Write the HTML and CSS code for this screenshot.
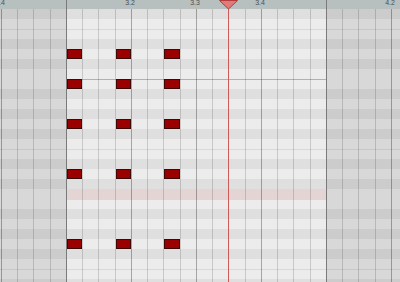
FILE: index.html
```html
<!DOCTYPE html>
<html>
<head>
<meta charset="utf-8">
<link rel="stylesheet" href="styles.css">
</head>
<body>
<div class="roll">
  <div class="ruler cols">
    <div class="c first"></div>
    <div class="c w16 beat"><span class="lbl">2.4</span></div>
    <div class="c w16"></div><div class="c w17"></div><div class="c w16"></div>
    <div class="c w16 bar"></div>
    <div class="c w16"></div><div class="c w17"></div><div class="c w16"></div>
    <div class="c w16 beat"><span class="lbl">3.2</span></div>
    <div class="c w16"></div><div class="c w17"></div><div class="c w16"></div>
    <div class="c w16 beat"><span class="lbl">3.3</span></div>
    <div class="c w16"></div><div class="c w17"></div><div class="c w16"></div>
    <div class="c w16 beat"><span class="lbl">3.4</span></div>
    <div class="c w16"></div><div class="c w17"></div><div class="c w16"></div>
    <div class="c w16 bar"></div>
    <div class="c w16"></div><div class="c w17"></div><div class="c w16"></div>
    <div class="c w9 beat"><span class="lbl">4.2</span></div>
  </div>
  <div class="body">
    <div class="regions">
      <div class="out l"></div><div class="loop"></div><div class="out r"></div>
    </div>
    <div class="keys">
      <div class="k b"></div>
      <div class="k"></div>
      <div class="k e"></div>
      <div class="k b"></div>
      <div class="k"></div>
      <div class="k b"></div>
      <div class="k"></div>
      <div class="k"><div class="seg oct"></div></div>
      <div class="k b"></div>
      <div class="k"></div>
      <div class="k b"></div>
      <div class="k"></div>
      <div class="k b"></div>
      <div class="k"></div>
      <div class="k e"></div>
      <div class="k b"></div>
      <div class="k"></div>
      <div class="k b"></div>
      <div class="k"><div class="seg hl"></div></div>
      <div class="k"><div class="seg oct faint"></div></div>
      <div class="k b"></div>
      <div class="k"></div>
      <div class="k b"></div>
      <div class="k"></div>
      <div class="k b"></div>
      <div class="k"></div>
      <div class="k e"></div>
      <div class="k b"></div>
    </div>
    <div class="lines cols">
      <div class="c first"></div>
      <div class="c w16 beat"></div>
      <div class="c w16"></div><div class="c w17"></div><div class="c w16"></div>
      <div class="c w16 bar"></div>
      <div class="c w16"></div><div class="c w17"></div><div class="c w16"></div>
      <div class="c w16 beat"></div>
      <div class="c w16"></div><div class="c w17"></div><div class="c w16"></div>
      <div class="c w16 beat"></div>
      <div class="c w16"></div><div class="c w17"></div><div class="c w16"></div>
      <div class="c w16 beat"></div>
      <div class="c w16"></div><div class="c w17"></div><div class="c w16"></div>
      <div class="c w16 bar"></div>
      <div class="c w16"></div><div class="c w17"></div><div class="c w16"></div>
      <div class="c w9 beat"></div>
    </div>
    <div class="notes">
      <div class="n" style="grid-area:5/6"></div>
      <div class="n" style="grid-area:5/9"></div>
      <div class="n" style="grid-area:5/12"></div>
      <div class="n" style="grid-area:8/6"></div>
      <div class="n" style="grid-area:8/9"></div>
      <div class="n" style="grid-area:8/12"></div>
      <div class="n" style="grid-area:12/6"></div>
      <div class="n" style="grid-area:12/9"></div>
      <div class="n" style="grid-area:12/12"></div>
      <div class="n" style="grid-area:17/6"></div>
      <div class="n" style="grid-area:17/9"></div>
      <div class="n" style="grid-area:17/12"></div>
      <div class="n" style="grid-area:24/6"></div>
      <div class="n" style="grid-area:24/9"></div>
      <div class="n" style="grid-area:24/12"></div>
    </div>
  </div>
  <div class="ph"></div>
  <svg class="ph-tri" width="19" height="10" viewBox="0 0 19 10">
    <polygon points="0.5,0.5 18.5,0.5 9.5,9" fill="#de7c7c" stroke="#b53c3c" stroke-width="1"/>
  </svg>
</div>
</body>
</html>
```
FILE: styles.css
```css
* { box-sizing: border-box; margin: 0; padding: 0; }
body { margin: 0; background: #d8d8d8; font-family: "Liberation Sans", Arial, sans-serif; }
.roll { position: relative; width: 400px; height: 282px; overflow: hidden; }

.cols { display: flex; }
.c { flex: none; border-left: 1px solid rgba(0, 0, 0, 0.15); }
.c.first { border-left: 0; width: 1px; }
.w16 { width: 16px; }
.w17 { width: 17px; }
.w9 { width: 9px; }
.c.beat { border-left-color: rgba(0, 0, 0, 0.3); }
.c.bar { border-left-color: #7a7a7a; }

.ruler { height: 9px; background: #b8c0bf; }
.ruler .c { border-left-color: transparent; }
.ruler .c.bar { border-left-color: #7a7a7a; }
.lbl {
  width: 0; display: flex; justify-content: center;
  margin-left: -2px; margin-top: -1px;
  font-size: 7px; line-height: 7px; color: #505050; white-space: nowrap;
}

.body { display: grid; height: 273px; }
.body > * { grid-area: 1 / 1; }

.regions { display: flex; }
.out { background: #d8d8d8; }
.out.l { width: 66px; }
.loop { width: 260px; background: #ececec; }
.out.r { flex: 1; }

.keys { display: flex; flex-direction: column; }
.k { flex: none; height: 10px; }
.k.b { background: rgba(0, 0, 0, 0.055); }
.k.e { border-top: 1px solid rgba(0, 0, 0, 0.08); }
.seg { margin-left: 66px; width: 260px; }
.oct { height: 1px; background: rgba(0, 0, 0, 0.25); }
.oct.faint { background: rgba(0, 0, 0, 0.08); }
.hl { height: 100%; background: #e4d4d4; }

.notes {
  display: grid;
  grid-template-columns: 1px repeat(6, 16px 16px 17px 16px) 9px;
  grid-template-rows: repeat(28, 10px);
}
.n { margin-left: 1px; background: #9a0000; border: 1px solid #3a0a0a; }

.ph { position: absolute; left: 228px; top: 0; width: 1px; height: 282px; background: #cf5a5a; }
.ph-tri { position: absolute; left: 219px; top: 0; display: block; }
```
